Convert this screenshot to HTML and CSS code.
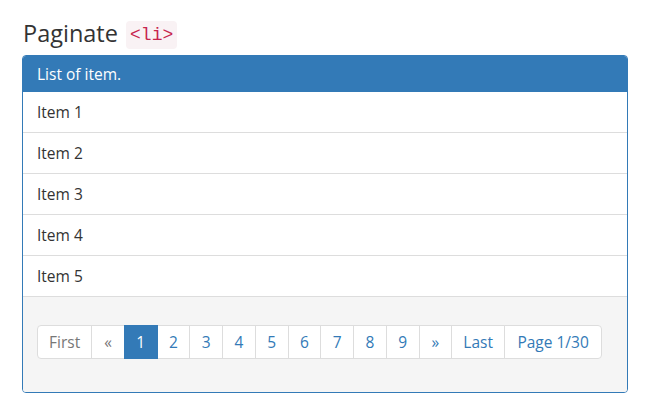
FILE: index.html
```html
<!DOCTYPE html>
<html>
<head>
<meta charset="utf-8">
<link rel="stylesheet" href="styles.css">
</head>
<body>
<div class="page">
  <h3 class="title">Paginate <code class="code">&lt;li&gt;</code></h3>
  <div class="panel">
    <div class="panel-heading">List of item.</div>
    <ul class="list">
      <li class="list-item">Item 1</li>
      <li class="list-item">Item 2</li>
      <li class="list-item">Item 3</li>
      <li class="list-item">Item 4</li>
      <li class="list-item">Item 5</li>
    </ul>
    <div class="panel-footer">
      <ul class="pagination">
        <li class="pg disabled first">First</li>
        <li class="pg disabled arrow">&laquo;</li>
        <li class="pg active">1</li>
        <li class="pg">2</li>
        <li class="pg">3</li>
        <li class="pg">4</li>
        <li class="pg">5</li>
        <li class="pg">6</li>
        <li class="pg">7</li>
        <li class="pg">8</li>
        <li class="pg">9</li>
        <li class="pg arrow">&raquo;</li>
        <li class="pg lastlink">Last</li>
        <li class="pg last pageinfo">Page 1/30</li>
      </ul>
    </div>
  </div>
</div>
</body>
</html>
```
FILE: styles.css
```css
* { box-sizing: border-box; }
html, body { margin: 0; padding: 0; background: #fff; }
body {
  font-family: "Open Sans", "Noto Sans", sans-serif;
  font-size: 15.5px;
  line-height: 20px;
  color: #333;
}
.page { padding: 0 22px; }
.title {
  margin: 20px 0 9px 1px;
  font-size: 23.5px;
  line-height: 26px;
  font-weight: 400;
  color: #333;
}
.code {
  font-family: "Liberation Mono", "DejaVu Sans Mono", monospace;
  font-size: 18px;
  line-height: 1;
  color: #c7254e;
  background: #f9f2f4;
  padding: 4px 4px 4px;
  border-radius: 4px;
  position: relative;
  top: -2px;
  margin-left: 2px;
}
.panel {
  border: 1px solid #337ab7;
  border-radius: 4px;
  overflow: hidden;
}
.panel-heading {
  background: #337ab7;
  color: #fff;
  padding: 8px 14px 8px;
}
.list { list-style: none; margin: 0; padding: 0; }
.list-item {
  padding: 10px 14px;
  border-bottom: 1px solid #ddd;
  background: #fff;
}
.panel-footer {
  background: #f5f5f5;
  padding: 28px 14px 33px;
}
.pagination {
  list-style: none;
  margin: 0;
  padding: 0;
  display: flex;
}
.pg {
  flex: 0 0 auto;
  white-space: nowrap;
  padding: 6px 11.45px;
  border: 1px solid #ddd;
  margin-left: -1px;
  background: #fff;
  color: #337ab7;
  line-height: 20px;
}
.pg.first { margin-left: 0; border-radius: 4px 0 0 4px; padding: 6px 11px; }
.pg.last { border-radius: 0 4px 4px 0; }
.pg.arrow { padding: 6px 12px; }
.pg.lastlink { padding: 6px 11px; }
.pg.pageinfo { padding: 6px 12.5px; }
.pg.disabled { color: #777; }
.pg.active { background: #337ab7; border-color: #337ab7; color: #fff; position: relative; }
```
